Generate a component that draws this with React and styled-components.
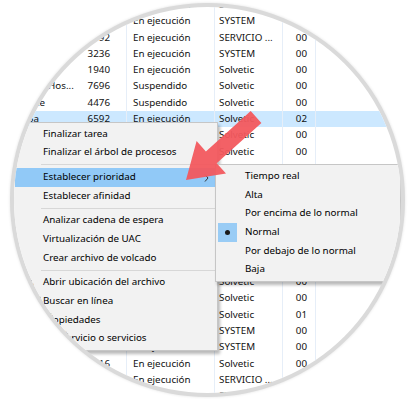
import React from "react";
import styled, { createGlobalStyle } from "styled-components";

const GlobalStyle = createGlobalStyle`
  html, body {
    margin: 0;
    padding: 0;
    background: #fff;
  }
  body {
    font-family: "Noto Sans", "DejaVu Sans", sans-serif;
  }
`;

const Stage = styled.div`
  width: 410px;
  height: 399px;
  padding: 3px 0 0 10px;
  box-sizing: border-box;
  overflow: hidden;
`;

const Circle = styled.div`
  position: relative;
  width: 395px;
  height: 394px;
  box-sizing: border-box;
  border-radius: 50%;
  border: 4px solid #dadada;
  box-shadow: 0 0 3px rgba(0, 0, 0, 0.12);
  overflow: hidden;
  background: #fff;
`;

const Table = styled.div`
  margin-top: -10px;
  font-size: 9.8px;
  color: #111;
`;

const Row = styled.div`
  display: grid;
  grid-template-columns: 66px 46px 88px 68px 33px 1fr;
  height: 16.3px;
  line-height: 16.3px;
  background: ${(p) => (p.$selected ? "#cce8ff" : "transparent")};
`;

const Cell = styled.div`
  white-space: nowrap;
  overflow: hidden;
  text-align: ${(p) => (p.$right ? "right" : "left")};
  padding: ${(p) => p.$pad || "0"};
  border-left: ${(p) => (p.$line ? "1px solid #e6eef8" : "none")};
  box-sizing: border-box;
`;

const Menu = styled.div`
  position: absolute;
  left: ${(p) => p.$x}px;
  top: ${(p) => p.$y}px;
  width: ${(p) => p.$w}px;
  box-sizing: border-box;
  padding: 2px 2px 2px 1px;
  background: #f2f2f2;
  border: 1px solid #c6c6c6;
  box-shadow: 2px 3px 3px rgba(0, 0, 0, 0.28);
  font-size: 9.8px;
  color: #000;
`;

const Item = styled.div`
  position: relative;
  height: 18.7px;
  line-height: 18.7px;
  padding-left: 28px;
  white-space: nowrap;
  background: ${(p) => (p.$active ? "#91c9f7" : "transparent")};
`;

const Separator = styled.div`
  height: 1px;
  margin: 2.5px 0 2.5px 26px;
  background: #d7d7d7;
`;

const Chevron = styled.svg`
  position: absolute;
  right: 6px;
  top: 6px;
`;

const Check = styled.span`
  position: absolute;
  left: 1px;
  top: 0;
  width: 19px;
  height: 19px;
  background: #99ccf5;
  display: flex;
  align-items: center;
  justify-content: center;
  &::after {
    content: "";
    width: 5px;
    height: 5px;
    border-radius: 50%;
    background: #1a1a1a;
  }
`;

const Overlay = styled.svg`
  position: absolute;
  left: -14px;
  top: -7px;
  pointer-events: none;
`;

const rows = [
  ["", "", "En ejecución", "SYSTEM", ""],
  ["", "", "En ejecución", "SYSTEM", ""],
  ["", "1192", "En ejecución", "SERVICIO ...", "00"],
  ["", "3236", "En ejecución", "SYSTEM", "00"],
  ["", "1940", "En ejecución", "Solvetic", "00"],
  ["TaskHos...", "7696", "Suspendido", "Solvetic", "00"],
  ["Ake", "4476", "Suspendido", "Solvetic", "00"],
  ["Sa", "6592", "En ejecución", "Solvetic", "02"],
  ["taskhostw.exe", "6688", "En ejecución", "Solvetic", "00"],
  ["explorer.exe", "6712", "En ejecución", "Solvetic", "00"],
  ["ShellExperie...", "6920", "En ejecución", "Solvetic", "00"],
  ["SearchUI.exe", "7044", "En ejecución", "Solvetic", "00"],
  ["RuntimeBrok...", "7188", "En ejecución", "Solvetic", "00"],
  ["ctfmon.exe", "7236", "En ejecución", "Solvetic", "00"],
  ["OneDrive.exe", "7304", "En ejecución", "Solvetic", "00"],
  ["vmtoolsd.exe", "7348", "En ejecución", "Solvetic", "00"],
  ["chrome.exe", "7420", "En ejecución", "Solvetic", "00"],
  ["chrome.exe", "7488", "En ejecución", "Solvetic", "00"],
  ["chrome.exe", "7532", "En ejecución", "Solvetic", "00"],
  ["Taskmgr.exe", "7604", "En ejecución", "Solvetic", "01"],
  ["svchost.exe", "7680", "En ejecución", "SYSTEM", "00"],
  ["audiodg.exe", "7712", "En ejecución", "SYSTEM", "00"],
  ["notepad.exe", "7716", "En ejecución", "Solvetic", "00"],
  ["svchost.exe", "7760", "En ejecución", "SERVICIO ...", "00"],
  ["svchost.exe", "7804", "En ejecución", "SYSTEM", "00"],
];

const mainMenu = [
  ["Finalizar tarea"],
  ["Finalizar el árbol de procesos"],
  "sep",
  ["Establecer prioridad", "active"],
  ["Establecer afinidad"],
  "sep",
  ["Analizar cadena de espera"],
  ["Virtualización de UAC"],
  ["Crear archivo de volcado"],
  "sep",
  ["Abrir ubicación del archivo"],
  ["Buscar en línea"],
  ["Propiedades"],
  ["Ir a servicio o servicios"],
];

const priorities = [
  "Tiempo real",
  "Alta",
  "Por encima de lo normal",
  "Normal",
  "Por debajo de lo normal",
  "Baja",
];

export default function App() {
  return (
    <>
      <GlobalStyle />
      <Stage>
        <Circle>
          <Table>
            {rows.map((r, i) => (
              <Row key={i} $selected={i === 7}>
                <Cell $pad="0 2px 0 14px">{r[0]}</Cell>
                <Cell $right $pad="0 16px 0 0">{r[1]}</Cell>
                <Cell $line $pad="0 0 0 6px">{r[2]}</Cell>
                <Cell $line $pad="0 0 0 4px">{r[3]}</Cell>
                <Cell $line $right $pad="0 8px 0 0">{r[4]}</Cell>
                <Cell $line />
              </Row>
            ))}
          </Table>

          <Menu $x={-1} $y={114.5} $w={205}>
            {mainMenu.map((m, i) =>
              m === "sep" ? (
                <Separator key={i} />
              ) : (
                <Item key={i} $active={m[1] === "active"}>
                  {m[0]}
                  {m[1] === "active" && (
                    <Chevron width="5" height="8" viewBox="0 0 5 8">
                      <path d="M1 0.5 L4 4 L1 7.5" fill="none" stroke="#333" strokeWidth="1" />
                    </Chevron>
                  )}
                </Item>
              )
            )}
          </Menu>

          <Menu $x={201} $y={157} $w={186}>
            {priorities.map((p) => (
              <Item key={p}>
                {p === "Normal" && <Check />}
                {p}
              </Item>
            ))}
          </Menu>

          <Overlay width="410" height="399" viewBox="0 0 410 399">
            <polygon
              points="186,180 196.6,141 205.9,151.4 250.7,111.1 261.4,122.9 216.7,163.2 226,173.6"
              fill="#f2595e"
              opacity="0.95"
            />
          </Overlay>
        </Circle>
      </Stage>
    </>
  );
}
